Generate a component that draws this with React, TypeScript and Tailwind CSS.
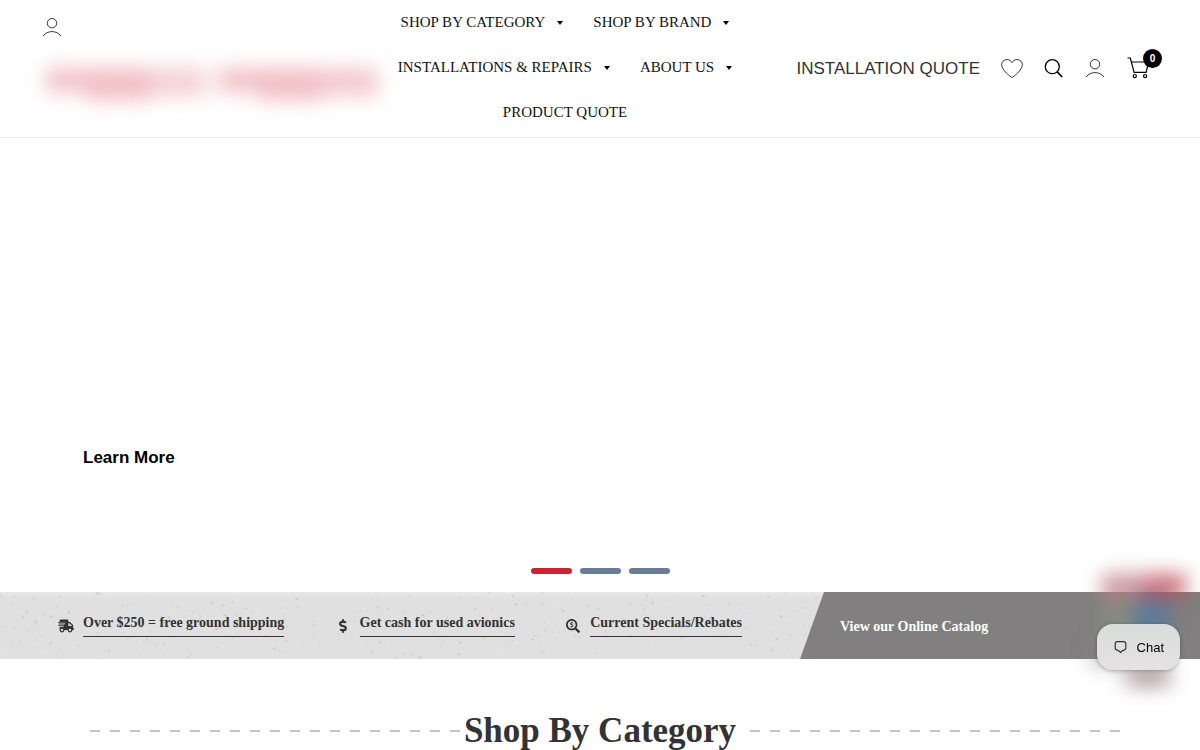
import { FaDollarSign, FaSearchDollar, FaShippingFast } from "react-icons/fa";

const navItems = [
  { label: "SHOP BY CATEGORY", hasMenu: true },
  { label: "SHOP BY BRAND", hasMenu: true },
  { label: "INSTALLATIONS & REPAIRS", hasMenu: true },
  { label: "ABOUT US", hasMenu: true },
  { label: "PRODUCT QUOTE", hasMenu: false },
];

const perks = [
  { label: "Over $250 = free ground shipping", icon: FaShippingFast },
  { label: "Get cash for used avionics", icon: FaDollarSign },
  { label: "Current Specials/Rebates", icon: FaSearchDollar },
];

// small scratches of the paper texture
const specks = Array.from({ length: 380 }, (_, i) => ({
  x: (i * i * 17.3 + i * 91.7) % 824,
  y: (i * i * 7.9 + i * 23.1) % 67,
  dx: ((i * 7) % 5) - 2,
  dy: ((i * 11) % 4) - 1,
  tone: i % 4 === 0 ? "#b4b4b4" : i % 4 === 1 ? "#cccccc" : "#e9e9e9",
}));

const UserIcon = () => (
  <svg
    width="20"
    height="20"
    viewBox="0 0 20 20"
    fill="none"
    stroke="#222"
    strokeWidth="0.9"
    aria-hidden="true"
  >
    <circle cx="10" cy="5.2" r="4.7" />
    <path d="M1 18C3.4 15 6.5 13.600 10 13.600s6.600 1.400 9 4.400" />
  </svg>
);

const HeartIcon = () => (
  <svg
    width="22"
    height="20"
    viewBox="0 0 22 20"
    fill="none"
    stroke="#222"
    strokeWidth="0.9"
    strokeLinejoin="round"
    aria-hidden="true"
  >
    <path d="M11 18.600C9.300 17.600 1 11.200.7 6.300.4 2.900 3 .6 6 .6c2.400 0 4 1.200 5 3.100C12 1.800 13.600.6 16 .6c3 0 5.600 2.300 5.300 5.700C21 11.200 12.700 17.600 11 18.600Z" />
  </svg>
);

const SearchIcon = () => (
  <svg
    width="20"
    height="20"
    viewBox="0 0 20 20"
    fill="none"
    stroke="#000"
    strokeWidth="1.3"
    aria-hidden="true"
  >
    <circle cx="8.3" cy="7.7" r="7" />
    <path d="M13.200 12.900 18.200 18" strokeWidth="1.7" />
  </svg>
);

const CartIcon = () => (
  <svg
    width="24"
    height="24"
    viewBox="0 0 24 24"
    fill="none"
    stroke="#000"
    strokeWidth="1.2"
    aria-hidden="true"
  >
    <path d="M1.500 1h2.800l3.800 14.300h12L22.600 5H5.400" />
    <circle cx="8.8" cy="19.1" r="1.6" />
    <circle cx="19.1" cy="19.1" r="1.6" />
  </svg>
);

const ChatIcon = () => (
  <svg
    width="14"
    height="14"
    viewBox="0 0 14 14"
    fill="none"
    stroke="#333"
    strokeWidth="1.2"
    strokeLinejoin="round"
    aria-hidden="true"
  >
    <path d="M3.400 1.600h6.200c1.500 0 2.200.8 2.200 2.200v4c0 1.500-.9 2.300-2.300 2.500-.8.100-1.200.400-1.700.9L6.500 12.500l-1.300-1.300c-.500-.500-.9-.8-1.700-.9-1.400-.2-2.300-1-2.300-2.500v-4c0-1.400.7-2.200 2.200-2.200Z" />
  </svg>
);

const Header = () => (
  <header className="flex border-b border-[#ebebeb] bg-white pl-[42px] pr-[38px]">
    <div className="w-[343px] shrink-0 pt-[18px]">
      <a href="#account" aria-label="Account" className="block w-5">
        <UserIcon />
      </a>
      <a
        href="#home"
        aria-label="Home"
        className="ml-1 mt-[30px] block blur-[10px]"
      >
        <span className="flex gap-3">
          <span className="flex h-9 w-40 items-start">
            <span className="h-6 w-10 bg-[#f1c0c5]" />
            <span className="h-8 w-16 bg-[#f1bec4]" />
            <span className="h-7 flex-1 bg-[#f5d0d2]" />
          </span>
          <span className="flex h-9 w-40 items-start">
            <span className="h-6 w-10 bg-[#f1c0c5]" />
            <span className="h-8 w-16 bg-[#f1bec4]" />
            <span className="h-7 flex-1 bg-[#f4c8cc]" />
          </span>
        </span>
      </a>
    </div>
    <nav className="flex w-[360px] shrink-0 flex-wrap justify-center gap-x-[30px] pb-0.5 font-['Liberation_Serif',serif] text-[15px] leading-[45px] text-[#111]">
      {navItems.map((item) => (
        <a
          key={item.label}
          href="#menu"
          className="flex items-center gap-3 whitespace-nowrap"
        >
          {item.label}
          {item.hasMenu && (
            <span className="h-0 w-0 border-x-[3px] border-t-4 border-x-transparent border-t-black" />
          )}
        </a>
      ))}
    </nav>
    <div className="ml-auto flex items-center">
      <a
        href="#quote"
        className="mr-[21px] whitespace-nowrap text-[17px] text-[#333]"
      >
        INSTALLATION QUOTE
      </a>
      <div className="flex items-center gap-[21px]">
        <a href="#wishlist" aria-label="Wishlist">
          <HeartIcon />
        </a>
        <button type="button" aria-label="Search">
          <SearchIcon />
        </button>
        <a href="#account" aria-label="Account">
          <UserIcon />
        </a>
        <a href="#cart" aria-label="Cart" className="relative mr-3">
          <CartIcon />
          <span className="absolute -right-3 -top-2 flex h-[19px] w-[19px] items-center justify-center rounded-full bg-black text-[10px] font-bold text-white">
            0
          </span>
        </a>
      </div>
    </div>
  </header>
);

const Hero = () => (
  <section className="flex h-[454px] flex-col justify-end bg-white">
    <a
      href="#learn"
      className="mb-[98px] ml-[83px] self-start text-[17px] font-bold leading-6 text-black"
    >
      Learn More
    </a>
    <div className="mb-[18px] flex justify-center gap-2">
      <button
        type="button"
        aria-label="Slide 1"
        className="h-1.5 w-[41px] rounded-full bg-[#cc2232]"
      />
      <button
        type="button"
        aria-label="Slide 2"
        className="h-1.5 w-[41px] rounded-full bg-[#6a7d96]"
      />
      <button
        type="button"
        aria-label="Slide 3"
        className="h-1.5 w-[41px] rounded-full bg-[#6a7d96]"
      />
    </div>
  </section>
);

const PerksBar = () => (
  <section className="relative flex h-[67px] bg-linear-to-b from-[#e8e8e8] to-[#e0e0e0] to-10% font-['Liberation_Serif',serif] text-[14px] font-bold">
    <svg
      className="absolute inset-0 h-full w-full"
      viewBox="0 0 1200 67"
      preserveAspectRatio="xMinYMin slice"
      fill="none"
      aria-hidden="true"
    >
      {specks.map((s, i) => (
        <path
          key={i}
          d={`M${s.x} ${s.y}l${s.dx} ${s.dy}`}
          stroke={s.tone}
          strokeWidth="0.8"
          strokeLinecap="round"
        />
      ))}
    </svg>
    <div className="relative flex w-2/3 items-center justify-between px-[58px] text-[#333]">
      {perks.map(({ label, icon: Icon }) => (
        <a
          key={label}
          href="#perk"
          className="flex items-center gap-[9px] whitespace-nowrap"
        >
          <Icon className="w-4 text-[14px]" />
          <span className="border-b border-[#333] pb-1 leading-[18px]">
            {label}
          </span>
        </a>
      ))}
    </div>
    <a
      href="#catalog"
      className="relative flex flex-1 items-center bg-[#817f80] pl-10 pt-0.5 text-white [clip-path:polygon(24px_0,100%_0,100%_100%,0_100%)]"
    >
      View our Online Catalog
    </a>
  </section>
);

const SealBadge = () => (
  <div
    className="pointer-events-none fixed bottom-[60px] right-3.5 h-[116px] w-[84px] opacity-80 blur-[10px]"
    aria-hidden="true"
  >
    <div className="flex h-6">
      <span className="flex-1 bg-[#c07c86]" />
      <span className="flex-1 bg-[#bd4c58]" />
    </div>
    <div className="flex h-10">
      <span className="w-8 bg-[#8e9a7c]/60" />
      <span className="w-9 bg-[#5479a0]" />
    </div>
    <div className="-ml-3 mt-1 h-6 w-8 bg-[#8b8484]/60" />
    <div className="ml-6 h-5 w-11 bg-[#7b5a62]/80" />
  </div>
);

const App = () => {
  return (
    <div className="overflow-x-hidden bg-white font-['Liberation_Sans',sans-serif]">
      <Header />
      <main>
        <Hero />
        <PerksBar />
        <section className="flex items-center pl-[90px] pr-20 pt-[50px]">
          <span className="h-0.5 flex-1 bg-[repeating-linear-gradient(90deg,#c4c4c4_0_10px,transparent_10px_20px)]" />
          <h2 className="whitespace-nowrap pl-1 pr-3.5 font-['Liberation_Serif',serif] text-[35px] font-bold leading-[44px] text-[#333]">
            Shop By Category
          </h2>
          <span className="h-0.5 flex-1 bg-[repeating-linear-gradient(90deg,#c4c4c4_0_10px,transparent_10px_20px)]" />
        </section>
      </main>
      <SealBadge />
      <button
        type="button"
        className="fixed bottom-20 right-5 flex h-[46px] items-center gap-[9px] rounded-2xl bg-linear-to-b from-[#d9dcda] to-[#e4e2e2] px-4 pl-[17px] text-[13px] text-black shadow-[0_1px_4px_rgba(0,0,0,0.3)]"
      >
        <ChatIcon />
        <span className="pt-0.5">Chat</span>
      </button>
    </div>
  );
};

export default App;
